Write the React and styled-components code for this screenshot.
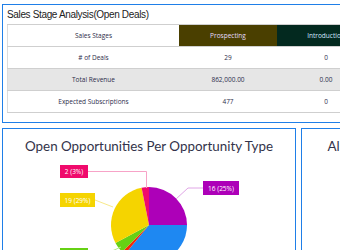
import React from 'react'
import styled, { createGlobalStyle } from 'styled-components'

const GlobalStyle = createGlobalStyle`
  html, body { margin:0; padding:0; background:#ffffff; overflow:hidden; }
  body { width:340px; height:250px; }
`

const stages = [
  { name: 'Prospecting', bg: '#4a3f00', fg: '#e4dcff', deals: '29', revenue: '862,000.00', subs: '477' },
  { name: 'Introduction', bg: '#03291f', fg: '#d4e8ff', deals: '0', revenue: '0.00', subs: '0' },
]

const slices = [
  { value: 16, color: '#ad00b8' },
  { value: 23, color: '#1e88f2' },
  { value: 1, color: '#f5260a' },
  { value: 3, color: '#66d114' },
  { value: 19, color: '#f5d400' },
  { value: 2, color: '#f00a6c' },
]

const CX = 146
const CY = 68
const R = 38

function pt(deg, r = R) {
  const a = (deg * Math.PI) / 180
  return [CX + r * Math.sin(a), CY - r * Math.cos(a)]
}

function slicePaths() {
  const total = slices.reduce((s, x) => s + x.value, 0)
  let start = 0
  return slices.map((s) => {
    const sweep = (s.value / total) * 360
    const [x1, y1] = pt(start)
    const [x2, y2] = pt(start + sweep)
    const large = sweep > 180 ? 1 : 0
    const d = `M${CX} ${CY} L${x1} ${y1} A${R} ${R} 0 ${large} 1 ${x2} ${y2} Z`
    start += sweep
    return { d, color: s.color }
  })
}

export default function App() {
  return (
    <Page>
      <GlobalStyle />
      <TopPanel>
        <PanelTitle>Sales Stage Analysis(Open Deals)</PanelTitle>
        <StageTable>
          <tbody>
            <tr>
              <LabelCell>Sales Stages</LabelCell>
              {stages.map((s) => (
                <HeadCell key={s.name} $bg={s.bg} $fg={s.fg}>{s.name}</HeadCell>
              ))}
            </tr>
            <tr>
              <LabelCell># of Deals</LabelCell>
              {stages.map((s) => <ValueCell key={s.name}>{s.deals}</ValueCell>)}
            </tr>
            <tr>
              <LabelCell $shade>Total Revenue</LabelCell>
              {stages.map((s) => <ValueCell key={s.name} $shade>{s.revenue}</ValueCell>)}
            </tr>
            <tr>
              <LabelCell>Expected Subscriptions</LabelCell>
              {stages.map((s) => <ValueCell key={s.name}>{s.subs}</ValueCell>)}
            </tr>
          </tbody>
        </StageTable>
      </TopPanel>

      <ChartRow>
        <ChartPanel>
          <ChartTitle>Open Opportunities Per Opportunity Type</ChartTitle>
          <ChartSvg width="292" height="110" viewBox="0 0 292 110">
            {slicePaths().map((p, i) => (
              <path key={i} d={p.d} fill={p.color} />
            ))}
            <polyline points="85,14.5 143.5,14.5 143.5,31" fill="none" stroke="#f7a3c7" strokeWidth="1" />
            <polyline points="92,43 110,50" fill="none" stroke="#f7e98a" strokeWidth="1" />
            <polyline points="200,31 185,31 173,42" fill="none" stroke="#e0a6e6" strokeWidth="1" />
            <polyline points="85,98 100,98 118,90" fill="none" stroke="#b5ea8a" strokeWidth="1" />
            <LabelBox x="57" y="8" width="28" height="13" fill="#f00a6c" />
            <LabelText x="71" y="17">2 (3%)</LabelText>
            <LabelBox x="57" y="36" width="35" height="14" fill="#f5d400" />
            <LabelText x="74.5" y="45.5">19 (29%)</LabelText>
            <LabelBox x="200" y="24" width="36" height="14" fill="#ad00b8" />
            <LabelText x="218" y="33.5">16 (25%)</LabelText>
            <LabelBox x="57" y="91" width="28" height="14" fill="#66d114" />
          </ChartSvg>
        </ChartPanel>
        <ChartPanel>
          <ChartTitle>All Opportunities Per Opportunity Stages</ChartTitle>
        </ChartPanel>
      </ChartRow>
    </Page>
  )
}

const Page = styled.div`
  display:flex;
  flex-direction:column;
  gap:5px;
  padding:4px 0 0 2px;
  width:600px;
`

const TopPanel = styled.div`
  width:380px;
  border:1px solid #1f7fe8;
  padding:0 0 9px 4px;
  box-sizing:border-box;
`

const PanelTitle = styled.div`
  height:19px;
  line-height:20px;
  font-family:"Liberation Sans", Arial, sans-serif;
  font-size:10px;
  letter-spacing:-0.35px;
  color:#222;
`

const StageTable = styled.table`
  width:367px;
  border-collapse:collapse;
  table-layout:fixed;
  font-family:"Open Sans", sans-serif;
  font-size:6.5px;
  color:#2d2d4a;
  td{
    height:21px;
    padding:0;
    text-align:center;
    white-space:nowrap;
    overflow:hidden;
    border-top:1px solid #cfcfcf;
    border-bottom:1px solid #cfcfcf;
  }
`

const LabelCell = styled.td`
  width:171px;
  border-left:1px solid #dcdcdc;
  background:${(p) => (p.$shade ? '#e6e6e6' : '#ffffff')};
`

const HeadCell = styled.td`
  width:98px;
  background:${(p) => p.$bg};
  color:${(p) => p.$fg};
`

const ValueCell = styled.td`
  width:98px;
  background:${(p) => (p.$shade ? '#e6e6e6' : '#ffffff')};
`

const ChartRow = styled.div`
  display:grid;
  grid-template-columns:294px 294px;
  gap:5px;
`

const ChartPanel = styled.div`
  height:160px;
  border:1px solid #1f7fe8;
  box-sizing:border-box;
  display:flex;
  flex-direction:column;
`

const ChartTitle = styled.div`
  height:28px;
  line-height:34px;
  text-align:center;
  font-family:Lato, "Open Sans", sans-serif;
  font-size:13.4px;
  color:#33334a;
  white-space:nowrap;
`

const ChartSvg = styled.svg`
  display:block;
`

const LabelBox = styled.rect``

const LabelText = styled.text`
  font-family:"Open Sans", sans-serif;
  font-size:6.5px;
  fill:#ffffff;
  text-anchor:middle;
`
